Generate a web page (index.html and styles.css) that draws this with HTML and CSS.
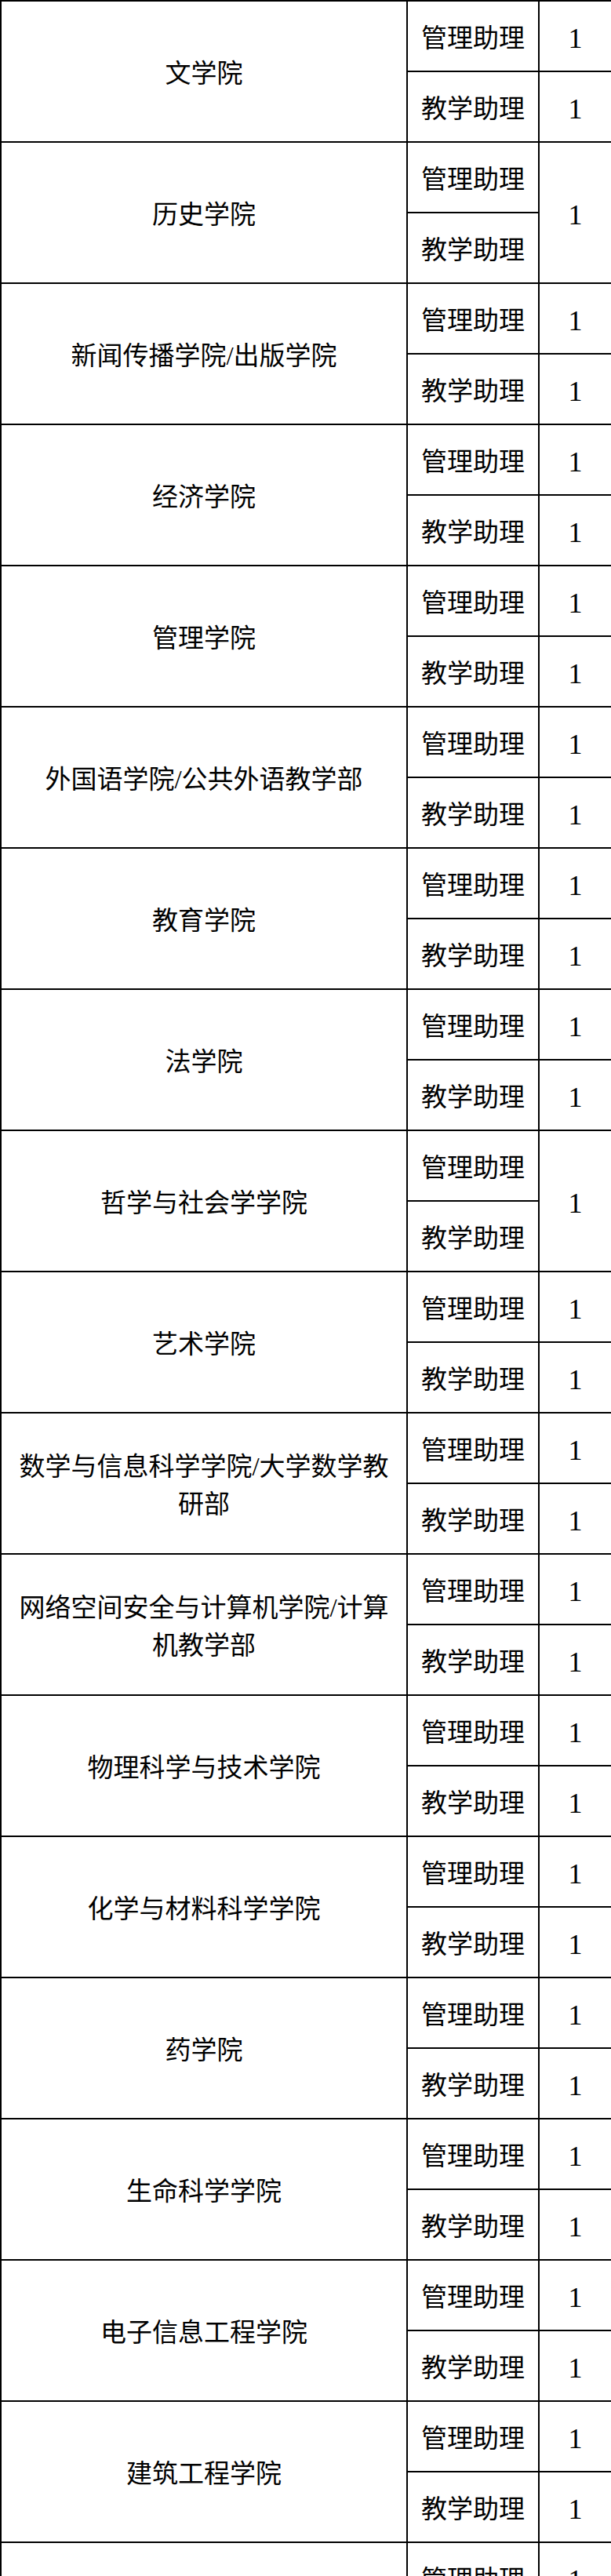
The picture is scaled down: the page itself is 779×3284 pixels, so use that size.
FILE: index.html
```html
<!DOCTYPE html>
<html lang="zh-CN">
<head>
<meta charset="utf-8">
<title>岗位表</title>
<link rel="stylesheet" href="styles.css">
</head>
<body>
<table class="posts">
  <colgroup>
    <col class="c-college">
    <col class="c-role">
    <col class="c-num">
  </colgroup>
  <tbody>
    <tr><td class="college" rowspan="2">文学院</td><td class="role">管理助理</td><td class="num">1</td></tr>
    <tr><td class="role">教学助理</td><td class="num">1</td></tr>

    <tr><td class="college" rowspan="2">历史学院</td><td class="role">管理助理</td><td class="num" rowspan="2">1</td></tr>
    <tr><td class="role">教学助理</td></tr>

    <tr><td class="college" rowspan="2">新闻传播学院/出版学院</td><td class="role">管理助理</td><td class="num">1</td></tr>
    <tr><td class="role">教学助理</td><td class="num">1</td></tr>

    <tr><td class="college" rowspan="2">经济学院</td><td class="role">管理助理</td><td class="num">1</td></tr>
    <tr><td class="role">教学助理</td><td class="num">1</td></tr>

    <tr><td class="college" rowspan="2">管理学院</td><td class="role">管理助理</td><td class="num">1</td></tr>
    <tr><td class="role">教学助理</td><td class="num">1</td></tr>

    <tr><td class="college" rowspan="2">外国语学院/公共外语教学部</td><td class="role">管理助理</td><td class="num">1</td></tr>
    <tr><td class="role">教学助理</td><td class="num">1</td></tr>

    <tr><td class="college" rowspan="2">教育学院</td><td class="role">管理助理</td><td class="num">1</td></tr>
    <tr><td class="role">教学助理</td><td class="num">1</td></tr>

    <tr><td class="college" rowspan="2">法学院</td><td class="role">管理助理</td><td class="num">1</td></tr>
    <tr><td class="role">教学助理</td><td class="num">1</td></tr>

    <tr><td class="college" rowspan="2">哲学与社会学学院</td><td class="role">管理助理</td><td class="num" rowspan="2">1</td></tr>
    <tr><td class="role">教学助理</td></tr>

    <tr><td class="college" rowspan="2">艺术学院</td><td class="role">管理助理</td><td class="num">1</td></tr>
    <tr><td class="role">教学助理</td><td class="num">1</td></tr>

    <tr><td class="college" rowspan="2">数学与信息科学学院/大学数学教研部</td><td class="role">管理助理</td><td class="num">1</td></tr>
    <tr><td class="role">教学助理</td><td class="num">1</td></tr>

    <tr><td class="college" rowspan="2">网络空间安全与计算机学院/计算机教学部</td><td class="role">管理助理</td><td class="num">1</td></tr>
    <tr><td class="role">教学助理</td><td class="num">1</td></tr>

    <tr><td class="college" rowspan="2">物理科学与技术学院</td><td class="role">管理助理</td><td class="num">1</td></tr>
    <tr><td class="role">教学助理</td><td class="num">1</td></tr>

    <tr><td class="college" rowspan="2">化学与材料科学学院</td><td class="role">管理助理</td><td class="num">1</td></tr>
    <tr><td class="role">教学助理</td><td class="num">1</td></tr>

    <tr><td class="college" rowspan="2">药学院</td><td class="role">管理助理</td><td class="num">1</td></tr>
    <tr><td class="role">教学助理</td><td class="num">1</td></tr>

    <tr><td class="college" rowspan="2">生命科学学院</td><td class="role">管理助理</td><td class="num">1</td></tr>
    <tr><td class="role">教学助理</td><td class="num">1</td></tr>

    <tr><td class="college" rowspan="2">电子信息工程学院</td><td class="role">管理助理</td><td class="num">1</td></tr>
    <tr><td class="role">教学助理</td><td class="num">1</td></tr>

    <tr><td class="college" rowspan="2">建筑工程学院</td><td class="role">管理助理</td><td class="num">1</td></tr>
    <tr><td class="role">教学助理</td><td class="num">1</td></tr>

    <tr><td class="college" rowspan="2"></td><td class="role">管理助理</td><td class="num">1</td></tr>
    <tr><td class="role">教学助理</td><td class="num">1</td></tr>
  </tbody>
</table>
</body>
</html>
```
FILE: styles.css
```css
html, body {
  margin: 0;
  padding: 0;
  background: #ffffff;
}

body {
  font-family: "Liberation Serif", "Noto Sans CJK SC", serif;
  color: #000000;
}

.posts {
  width: 779px;
  table-layout: fixed;
  border-collapse: collapse;
}

.c-college { width: 518px; }
.c-role { width: 168px; }
.c-num { width: 93px; }

.posts td {
  border: 2px solid #000000;
  height: 90px;
  padding: 6px 0 0 0;
  box-sizing: border-box;
  text-align: center;
  vertical-align: middle;
  font-size: 33px;
  line-height: 48px;
  font-weight: 400;
}

.posts td.college {
  padding: 6px 14px 0 14px;
}

.posts td.num {
  font-size: 36px;
}
```
